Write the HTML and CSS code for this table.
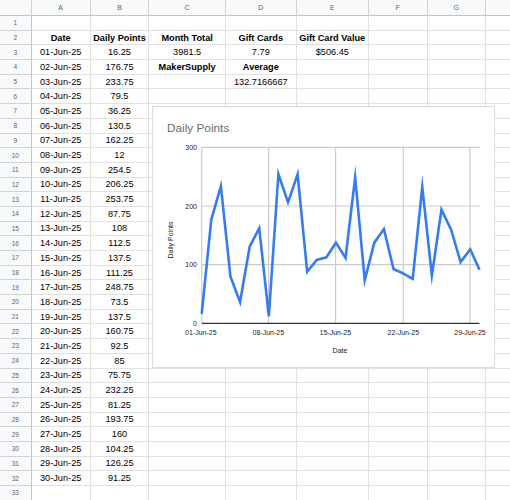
FILE: index.html
```html
<!DOCTYPE html>
<html>
<head>
<meta charset="utf-8">
<link rel="stylesheet" href="styles.css">
</head>
<body>
<div class="wrap">
<div class="sheet">
<div class="h"></div><div class="h">A</div><div class="h">B</div><div class="h">C</div><div class="h">D</div><div class="h">E</div><div class="h">F</div><div class="h">G</div><div class="h"></div>
<div class="n">1</div><div></div><div></div><div></div><div></div><div></div><div></div><div></div><div></div>
<div class="n">2</div><div class="b">Date</div><div class="b">Daily Points</div><div class="b">Month Total</div><div class="b">Gift Cards</div><div class="b">Gift Card Value</div><div></div><div></div><div></div>
<div class="n">3</div><div>01-Jun-25</div><div>16.25</div><div>3981.5</div><div>7.79</div><div>$506.45</div><div></div><div></div><div></div>
<div class="n">4</div><div>02-Jun-25</div><div>176.75</div><div class="b">MakerSupply</div><div class="b">Average</div><div></div><div></div><div></div><div></div>
<div class="n">5</div><div>03-Jun-25</div><div>233.75</div><div></div><div>132.7166667</div><div></div><div></div><div></div><div></div>
<div class="n">6</div><div>04-Jun-25</div><div>79.5</div><div></div><div></div><div></div><div></div><div></div><div></div>
<div class="n">7</div><div>05-Jun-25</div><div>36.25</div><div></div><div></div><div></div><div></div><div></div><div></div>
<div class="n">8</div><div>06-Jun-25</div><div>130.5</div><div></div><div></div><div></div><div></div><div></div><div></div>
<div class="n">9</div><div>07-Jun-25</div><div>162.25</div><div></div><div></div><div></div><div></div><div></div><div></div>
<div class="n">10</div><div>08-Jun-25</div><div>12</div><div></div><div></div><div></div><div></div><div></div><div></div>
<div class="n">11</div><div>09-Jun-25</div><div>254.5</div><div></div><div></div><div></div><div></div><div></div><div></div>
<div class="n">12</div><div>10-Jun-25</div><div>206.25</div><div></div><div></div><div></div><div></div><div></div><div></div>
<div class="n">13</div><div>11-Jun-25</div><div>253.75</div><div></div><div></div><div></div><div></div><div></div><div></div>
<div class="n">14</div><div>12-Jun-25</div><div>87.75</div><div></div><div></div><div></div><div></div><div></div><div></div>
<div class="n">15</div><div>13-Jun-25</div><div>108</div><div></div><div></div><div></div><div></div><div></div><div></div>
<div class="n">16</div><div>14-Jun-25</div><div>112.5</div><div></div><div></div><div></div><div></div><div></div><div></div>
<div class="n">17</div><div>15-Jun-25</div><div>137.5</div><div></div><div></div><div></div><div></div><div></div><div></div>
<div class="n">18</div><div>16-Jun-25</div><div>111.25</div><div></div><div></div><div></div><div></div><div></div><div></div>
<div class="n">19</div><div>17-Jun-25</div><div>248.75</div><div></div><div></div><div></div><div></div><div></div><div></div>
<div class="n">20</div><div>18-Jun-25</div><div>73.5</div><div></div><div></div><div></div><div></div><div></div><div></div>
<div class="n">21</div><div>19-Jun-25</div><div>137.5</div><div></div><div></div><div></div><div></div><div></div><div></div>
<div class="n">22</div><div>20-Jun-25</div><div>160.75</div><div></div><div></div><div></div><div></div><div></div><div></div>
<div class="n">23</div><div>21-Jun-25</div><div>92.5</div><div></div><div></div><div></div><div></div><div></div><div></div>
<div class="n">24</div><div>22-Jun-25</div><div>85</div><div></div><div></div><div></div><div></div><div></div><div></div>
<div class="n">25</div><div>23-Jun-25</div><div>75.75</div><div></div><div></div><div></div><div></div><div></div><div></div>
<div class="n">26</div><div>24-Jun-25</div><div>232.25</div><div></div><div></div><div></div><div></div><div></div><div></div>
<div class="n">27</div><div>25-Jun-25</div><div>81.25</div><div></div><div></div><div></div><div></div><div></div><div></div>
<div class="n">28</div><div>26-Jun-25</div><div>193.75</div><div></div><div></div><div></div><div></div><div></div><div></div>
<div class="n">29</div><div>27-Jun-25</div><div>160</div><div></div><div></div><div></div><div></div><div></div><div></div>
<div class="n">30</div><div>28-Jun-25</div><div>104.25</div><div></div><div></div><div></div><div></div><div></div><div></div>
<div class="n">31</div><div>29-Jun-25</div><div>126.25</div><div></div><div></div><div></div><div></div><div></div><div></div>
<div class="n">32</div><div>30-Jun-25</div><div>91.25</div><div></div><div></div><div></div><div></div><div></div><div></div>
<div class="n">33</div><div></div><div></div><div></div><div></div><div></div><div></div><div></div><div></div>
</div>
<div class="chart">
<svg width="341" height="260" viewBox="0 0 341 260">
<text class="title" x="14" y="24.8">Daily Points</text>
<g class="grid">
<line x1="48.7" y1="40.3" x2="326.5" y2="40.3"/>
<line x1="48.7" y1="99" x2="326.5" y2="99"/>
<line x1="48.7" y1="157.6" x2="326.5" y2="157.6"/>
<line x1="48.7" y1="40.3" x2="48.7" y2="216.3"/>
<line x1="115.6" y1="40.3" x2="115.6" y2="216.3"/>
<line x1="182.6" y1="40.3" x2="182.6" y2="216.3"/>
<line x1="250.3" y1="40.3" x2="250.3" y2="216.3"/>
<line x1="317" y1="40.3" x2="317" y2="216.3"/>
</g>
<line class="axis" x1="48.7" y1="216.3" x2="326.5" y2="216.3"/>
<g class="ytick">
<text x="44" y="42.8">300</text>
<text x="44" y="101.5">200</text>
<text x="44" y="160.1">100</text>
<text x="44" y="218.8">0</text>
</g>
<g class="xtick">
<text x="47.8" y="227.6">01-Jun-25</text>
<text x="115.3" y="227.6">08-Jun-25</text>
<text x="182.3" y="227.6">15-Jun-25</text>
<text x="250.3" y="227.6">22-Jun-25</text>
<text x="317" y="227.6">29-Jun-25</text>
</g>
<text class="axtitle" x="187" y="245.5">Date</text>
<text class="axtitle" transform="translate(19.5 133) rotate(-90)" x="0" y="0">Daily Points</text>
<polyline class="series" points="48.7,206.77 58.29,112.61 67.88,79.16 77.47,169.66 87.06,195.03 96.65,139.74 106.24,121.11 115.83,209.26 125.42,66.99 135.01,95.3 144.6,67.43 154.19,164.82 163.78,152.94 173.37,150.3 182.96,135.63 192.55,151.03 202.14,70.37 211.73,173.18 221.32,135.63 230.91,121.99 240.5,162.03 250.09,166.43 259.68,171.86 269.27,80.05 278.86,168.63 288.45,102.63 298.04,122.43 307.63,155.14 317.22,142.23 326.5,162.77"/>
</svg>
</div>
</div>
</body>
</html>
```

FILE: styles.css
```css
html, body {
  margin: 0;
  padding: 0;
  background: #fff;
  overflow: hidden;
}
body {
  width: 510px;
  height: 500px;
  font-family: "Liberation Sans", Arial, sans-serif;
}
.wrap {
  position: relative;
  width: 510px;
  height: 500px;
  overflow: hidden;
}
.sheet {
  display: grid;
  grid-template-columns: 31.7px 59px 58.6px 76.7px 70.7px 72.3px 58.7px 58px 58px;
  grid-template-rows: 16px repeat(33, 14.7px);
  width: max-content;
}
.sheet > div {
  box-sizing: border-box;
  border-right: 1px solid #e1e1e1;
  border-bottom: 1px solid #e1e1e1;
  font-size: 9.2px;
  color: #000;
  text-align: center;
  white-space: nowrap;
  display: flex;
  align-items: center;
  justify-content: center;
  overflow: visible;
}
.sheet > .h {
  background: #f8f9fa;
  color: #5f6368;
  font-size: 7px;
  border-right: 1px solid #d3d3d3;
  border-bottom: 1px solid #c4c4c4;
}
.sheet > .n {
  background: #f8f9fa;
  color: #5f6368;
  font-size: 6.5px;
  border-right: 1px solid #c4c4c4;
  border-bottom: 1px solid #d3d3d3;
}
.sheet > .b {
  font-weight: bold;
}
.chart {
  position: absolute;
  left: 152.7px;
  top: 107.3px;
  width: 341px;
  height: 260px;
  background: #fff;
  box-shadow: 0 0 0 1px #dcdcdc;
}
.chart svg {
  display: block;
  font-family: "Liberation Sans", Arial, sans-serif;
}
.title {
  font-size: 11.8px;
  fill: #6b6b6b;
}
.grid line {
  stroke: #cccccc;
  stroke-width: 1.2;
}
.axis {
  stroke: #333;
  stroke-width: 1.3;
}
.ytick text {
  font-size: 7px;
  fill: #222;
  text-anchor: end;
}
.xtick text {
  font-size: 7px;
  fill: #222;
  text-anchor: middle;
}
.axtitle {
  font-size: 7px;
  fill: #222;
  text-anchor: middle;
}
.series {
  fill: none;
  stroke: #367cf1;
  stroke-width: 2.6;
  stroke-linejoin: miter;
  stroke-miterlimit: 10;
}
```
